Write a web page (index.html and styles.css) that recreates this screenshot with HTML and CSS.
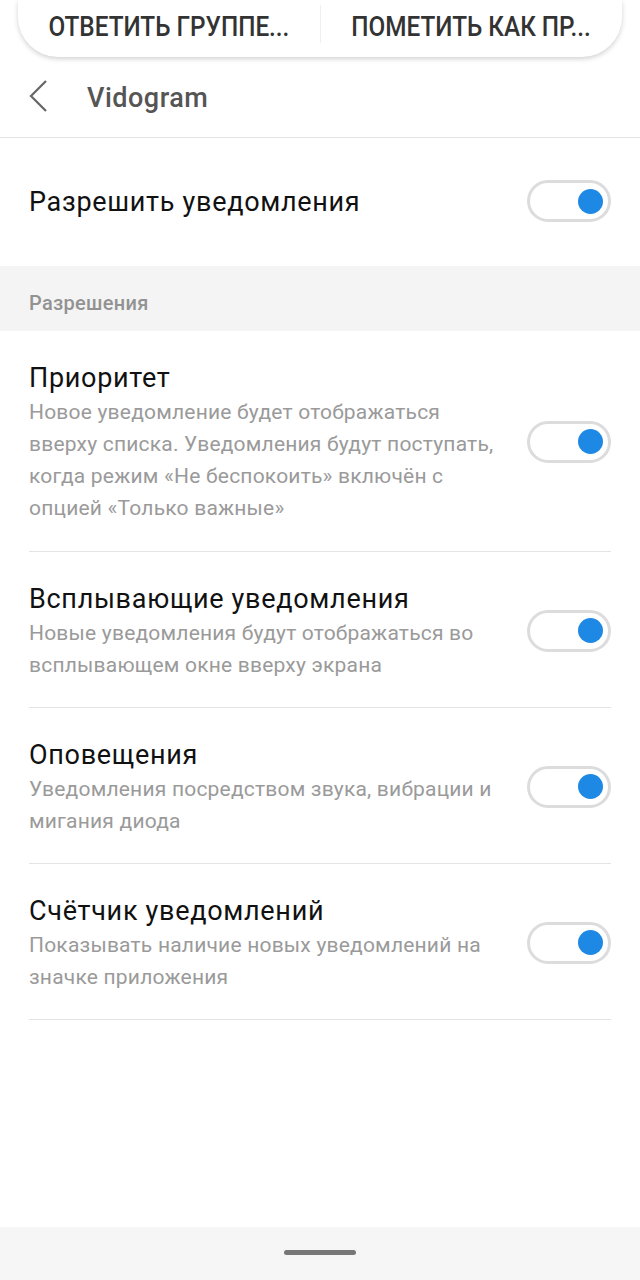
FILE: index.html
```html
<!DOCTYPE html>
<html lang="ru">

<head>
  <meta charset="UTF-8">
  <meta name="viewport" content="width=device-width, initial-scale=1.0">
  <title>Vidogram</title>
  <link rel="stylesheet" href="styles.css">
</head>

<body>
  <div class="screen">
    <div class="popup">
      <div class="popup-btn"><span>ОТВЕТИТЬ ГРУППЕ...</span></div>
      <div class="popup-sep"></div>
      <div class="popup-btn"><span>ПОМЕТИТЬ КАК ПР...</span></div>
    </div>

    <div class="header">
      <svg class="back" width="20" height="32" viewBox="0 0 20 32">
        <polyline points="17,1 2,16 17,31" fill="none" stroke="#666" stroke-width="2.2" />
      </svg>
      <span class="title">Vidogram</span>
    </div>

    <div class="row main-row">
      <div class="row-text">
        <div class="row-title">Разрешить уведомления</div>
      </div>
      <div class="switch"><span class="knob"></span></div>
    </div>

    <div class="section">Разрешения</div>

    <div class="list">
      <div class="row item">
        <div class="row-text">
          <div class="row-title">Приоритет</div>
          <div class="row-desc">Новое уведомление будет отображаться вверху списка. Уведомления будут поступать, когда режим «Не беспокоить» включён с опцией «Только важные»</div>
        </div>
        <div class="switch"><span class="knob"></span></div>
      </div>

      <div class="row item">
        <div class="row-text">
          <div class="row-title">Всплывающие уведомления</div>
          <div class="row-desc">Новые уведомления будут отображаться во всплывающем окне вверху экрана</div>
        </div>
        <div class="switch"><span class="knob"></span></div>
      </div>

      <div class="row item">
        <div class="row-text">
          <div class="row-title">Оповещения</div>
          <div class="row-desc">Уведомления посредством звука, вибрации и мигания диода</div>
        </div>
        <div class="switch"><span class="knob"></span></div>
      </div>

      <div class="row item">
        <div class="row-text">
          <div class="row-title">Счётчик уведомлений</div>
          <div class="row-desc">Показывать наличие новых уведомлений на значке приложения</div>
        </div>
        <div class="switch"><span class="knob"></span></div>
      </div>
    </div>

    <div class="spacer"></div>

    <div class="navbar">
      <span class="handle"></span>
    </div>
  </div>
</body>

</html>
```

FILE: styles.css
```css
body {
  margin: 0;
  font-family: Roboto, "Noto Sans", sans-serif;
  background: #fff;
}

.screen {
  width: 640px;
  height: 1280px;
  display: flex;
  flex-direction: column;
  overflow: hidden;
}

.popup {
  margin: 0 18px;
  height: 57px;
  display: flex;
  align-items: center;
  background: #fff;
  border-radius: 0 0 40px 40px;
  box-shadow: 0 2px 5px rgba(0, 0, 0, 0.18);
  position: relative;
  z-index: 1;
}

.popup-btn {
  flex: 1;
  text-align: center;
  font-size: 27px;
  font-weight: 500;
  color: #333;
  padding-bottom: 3px;
  white-space: nowrap;
}

.popup-btn span {
  display: inline-block;
  transform: scaleX(0.9);
}

.popup-sep {
  width: 1px;
  height: 38px;
  margin-bottom: 10px;
  background: #eee;
}

.header {
  height: 80px;
  display: flex;
  align-items: center;
  border-bottom: 1px solid #e3e3e3;
  padding-left: 29px;
}

.back {
  margin-right: 38px;
  margin-top: -3px;
}

.title {
  font-size: 27px;
  font-weight: 500;
  letter-spacing: 0.5px;
  color: #555;
  margin-top: 1px;
}

.row {
  display: flex;
  align-items: center;
  margin: 0 29px;
}

.main-row {
  height: 128px;
}

.row-text {
  flex: 1;
  padding-right: 24px;
}

.row-title {
  font-size: 27px;
  letter-spacing: 0.7px;
  color: #111;
  line-height: 34px;
}

.row-desc {
  font-size: 21px;
  letter-spacing: 0.2px;
  color: #9a9a9a;
  line-height: 32px;
  margin-top: 1px;
}

.section {
  background: #f4f4f4;
  height: 65px;
  line-height: 74px;
  padding-left: 29px;
  font-size: 20px;
  letter-spacing: 0.3px;
  font-weight: 500;
  color: #929292;
}

.item {
  padding: 30px 0 26px;
  border-bottom: 1px solid #e4e4e4;
}

.list .item:first-child {
  padding-bottom: 27px;
}

.switch {
  width: 84px;
  height: 42px;
  border: 3px solid #dcdcdc;
  border-radius: 21px;
  display: flex;
  align-items: center;
  justify-content: flex-end;
  padding-right: 5px;
  box-sizing: border-box;
  flex-shrink: 0;
  margin-top: -2px;
}

.knob {
  width: 25px;
  height: 25px;
  border-radius: 50%;
  background: #1e88e5;
}

.spacer {
  flex: 1;
}

.navbar {
  height: 53px;
  background: #f6f6f6;
  display: flex;
  justify-content: center;
  align-items: center;
}

.handle {
  width: 72px;
  height: 5px;
  border-radius: 3px;
  background: #777;
  margin-top: -3px;
}
```
